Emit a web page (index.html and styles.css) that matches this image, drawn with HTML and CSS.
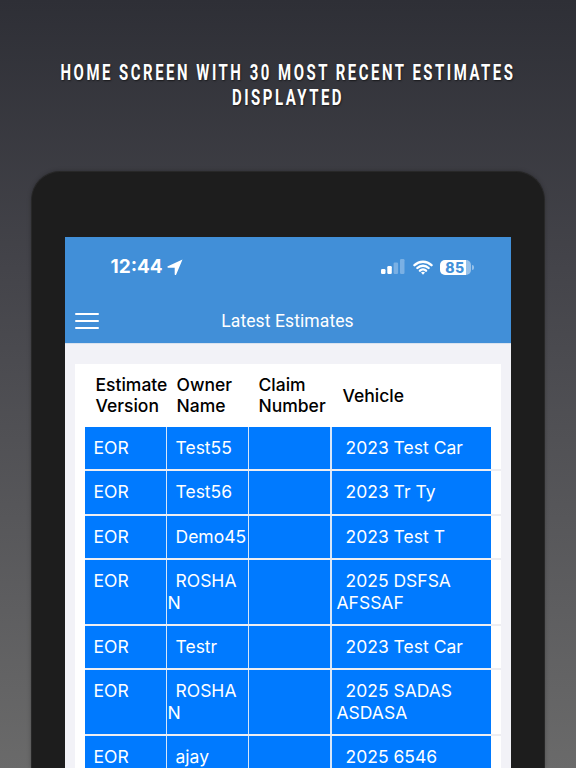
FILE: index.html
```html
<!DOCTYPE html>
<html lang="en">
<head>
<meta charset="utf-8">
<title>Latest Estimates</title>
<link rel="stylesheet" href="styles.css">
</head>
<body>
<div class="headline-wrap">
  <h1 class="headline">Home screen with 30 most recent estimates displayted</h1>
</div>
<div class="device">
  <div class="screen">
    <header class="appbar">
      <div class="status">
        <div class="status-left">
          <span class="time">12:44</span>
          <svg class="loc" viewBox="0 0 16 16"><path d="M15.5 .5 .9 7.3c-.8 .4 -.6 1.500 .3 1.500h6.500v6.500c0 .9 1.100 1.100 1.500 .3z" fill="#fff"/></svg>
        </div>
        <div class="status-right">
          <svg class="signal" viewBox="0 0 24 16"><rect x="0" y="10" width="4.500" height="5" rx="1.200" fill="#fff"/><rect x="6.300" y="7" width="4.500" height="8" rx="1.200" fill="#fff"/><rect x="12.600" y="3.500" width="4.500" height="11.500" rx="1.200" fill="#fff" opacity=".3"/><rect x="19" y="0" width="4.500" height="15" rx="1.200" fill="#fff" opacity=".3"/></svg>
          <svg class="wifi" viewBox="0 0 20 15"><path d="M1.500 5.200a12.200 12.200 0 0 1 17 0M4.400 8a8 8 0 0 1 11.200 0M7 10.700a4.300 4.300 0 0 1 6 0" fill="none" stroke="#fff" stroke-width="2.400" stroke-linecap="round"/><path d="m10 14.800-2-2.200a3 3 0 0 1 4 0z" fill="#fff"/></svg>
          <div class="battery"><span class="battery-text">85</span></div>
          <span class="battery-cap"></span>
        </div>
      </div>
      <div class="navrow">
        <div class="burger"><span></span><span></span><span></span></div>
        <div class="navtitle">Latest Estimates</div>
      </div>
    </header>
    <main class="content">
      <section class="card">
        <div class="thead">
          <div>Estimate Version</div>
          <div>Owner Name</div>
          <div>Claim Number</div>
          <div>Vehicle</div>
        </div>
        <div class="row"><div class="c1">EOR</div><div class="c2">Test55</div><div class="c3"></div><div class="c4">2023 Test Car</div></div>
        <div class="row"><div class="c1">EOR</div><div class="c2">Test56</div><div class="c3"></div><div class="c4">2023 Tr Ty</div></div>
        <div class="row"><div class="c1">EOR</div><div class="c2">Demo45</div><div class="c3"></div><div class="c4">2023 Test T</div></div>
        <div class="row"><div class="c1">EOR</div><div class="c2">ROSHAN</div><div class="c3"></div><div class="c4">2025 DSFSA AFSSAF</div></div>
        <div class="row"><div class="c1">EOR</div><div class="c2">Testr</div><div class="c3"></div><div class="c4">2023 Test Car</div></div>
        <div class="row"><div class="c1">EOR</div><div class="c2">ROSHAN</div><div class="c3"></div><div class="c4">2025 SADAS ASDASA</div></div>
        <div class="row"><div class="c1">EOR</div><div class="c2">ajay</div><div class="c3"></div><div class="c4">2025 6546</div></div>
      </section>
    </main>
  </div>
</div>
</body>
</html>
```
FILE: styles.css
```css
* { box-sizing: border-box; }
html, body { margin: 0; height: 768px; overflow: hidden; }
body {
  background: linear-gradient(180deg, #2e2f36 0%, #44444a 35%, #6a6a6a 100%);
  display: flex;
  flex-direction: column;
  align-items: center;
  padding-top: 60px;
}
.headline-wrap {
  flex: none;
  width: 100%;
  height: 111px;
  display: flex;
  justify-content: center;
  overflow: hidden;
}
.headline {
  margin: 0;
  flex: none;
  width: 690px;
  height: 60px;
  text-align: center;
  text-transform: uppercase;
  color: #fff;
  font: 700 22px/25px Roboto, "Liberation Sans", sans-serif;
  letter-spacing: 3.680px;
  transform: scaleX(.68);
  text-shadow: 1px 1px 2px rgba(0,0,0,.55);
}
.device {
  width: 514px;
  flex: 1;
  min-height: 0;
  margin-left: -1px;
  padding: 65px 33px 0;
  background: #1d1d1d;
  border: 1px solid #282828;
  border-bottom: 0;
  border-radius: 29px 29px 0 0;
  box-shadow: 0 0 4px rgba(0,0,0,.25);
}
.screen { height: 100%; background: #f2f2f7; overflow: hidden; }
.appbar { height: 107px; background: #418fd8; border-bottom: 1px solid #d9e2ee; color: #fff; }
.status {
  height: 41px;
  padding: 0 37px 0 46px;
  display: flex;
  justify-content: space-between;
  align-items: flex-end;
}
.status-left { display: flex; align-items: center; gap: 4px; height: 22px; }
.time { font: 700 19px/22px Inter, "Liberation Sans", sans-serif; }
.loc { width: 16px; height: 16px; }
.status-right { display: flex; align-items: center; height: 22px; }
.signal { width: 24px; height: 16px; margin-right: 8px; }
.wifi { width: 20px; height: 15px; margin-right: 7px; }
.battery {
  width: 31px; height: 15px;
  border-radius: 5px;
  background: linear-gradient(90deg, #fff 85%, rgba(255,255,255,.45) 85%);
  display: flex; align-items: center; justify-content: center;
}
.battery-text { font: 800 14px/15px Inter, "Liberation Sans", sans-serif; letter-spacing: .6px; color: #418fd8; }
.battery-cap { width: 2px; height: 5px; margin-left: 1px; background: rgba(255,255,255,.45); border-radius: 0 2px 2px 0; }
.navrow { position: relative; height: 65px; display: flex; align-items: flex-start; justify-content: center; padding-top: 32px; }
.navtitle { font: 400 17.500px/22px Roboto, "Liberation Sans", sans-serif; letter-spacing: .1px; }
.burger { position: absolute; left: 10px; top: 35px; width: 24px; display: flex; flex-direction: column; gap: 5px; }
.burger span { height: 2px; background: #fff; border-radius: 1px; }
.content { padding: 20px 10px 0; }
.card { background: #fff; padding: 0 0 0 10px; font: 400 17.500px/21.400px Inter, "Liberation Sans", sans-serif; }
.thead {
  display: grid;
  grid-template-columns: 82px 82px 83px 1fr;
  align-items: center;
  height: 62px;
  color: #000;
  font-weight: 500;
  line-height: 21px;
}
.thead > div { padding-left: 11px; }
.thead > div:nth-child(2) { padding-left: 10px; }
.thead > div:nth-child(3) { padding-left: 10px; }
.row {
  display: grid;
  grid-template-columns: 82px 82px 83px 159px;
  border-bottom: 2px solid #eeeef2;
}
.thead + .row { border-top: 1px solid #fff; }
.row > div {
  min-height: 42px;
  padding: 10px 0 11px;
  background: #007aff;
  color: #fff;
  border-right: 1px solid #d6e6fa;
  word-break: break-all;
}
.row > div.c1 { padding-left: 9px; }
.row > div.c2 { padding-left: 1px; text-indent: 8px; }
.row > div.c3 { border-right-width: 2px; }
.row > div.c4 { padding: 10px 20px 11px 5px; text-indent: 9px; word-break: normal; border-right: 0; }
```
